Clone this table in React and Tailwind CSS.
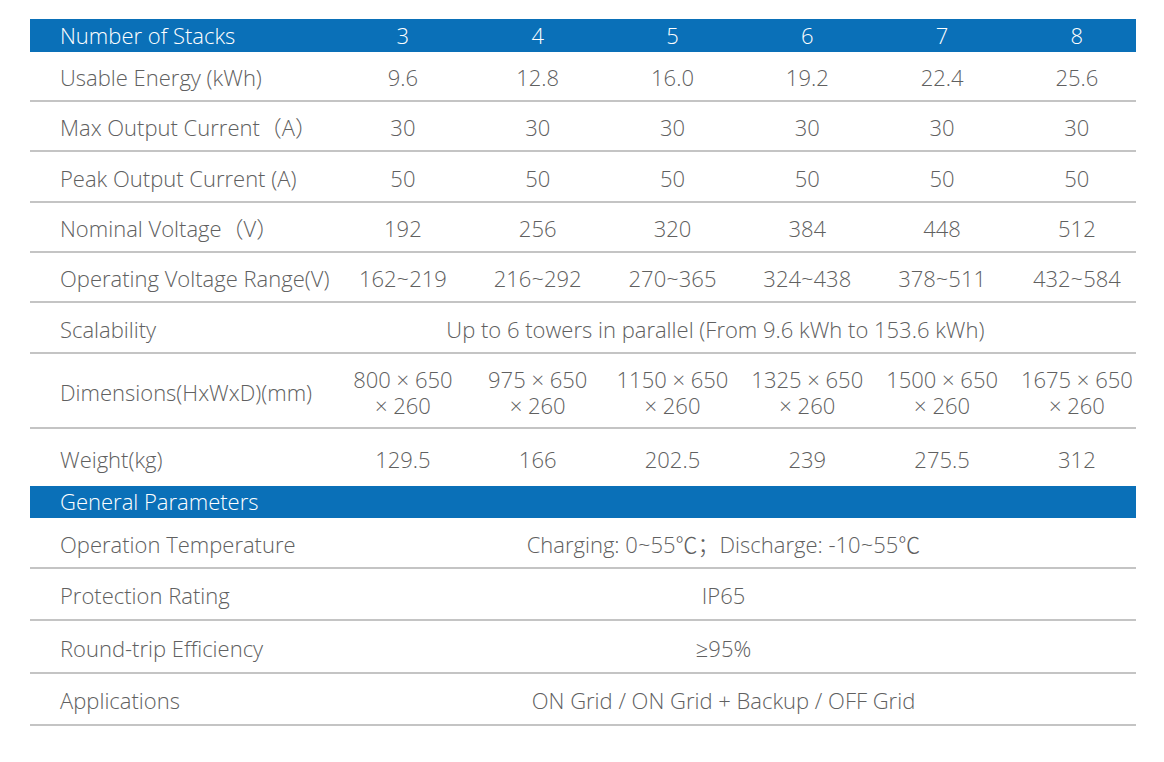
import React from "react";

const stacks = [3, 4, 5, 6, 7, 8];

const rows = [
  { label: "Usable Energy (kWh)", values: ["9.6", "12.8", "16.0", "19.2", "22.4", "25.6"], h: "h-[50px]" },
  { label: "Max Output Current（A）", values: ["30", "30", "30", "30", "30", "30"], h: "h-[50px]" },
  { label: "Peak Output Current (A)", values: ["50", "50", "50", "50", "50", "50"], h: "h-[51px]" },
  { label: "Nominal Voltage（V）", values: ["192", "256", "320", "384", "448", "512"], h: "h-[50px]" },
  { label: "Operating Voltage Range(V)", values: ["162~219", "216~292", "270~365", "324~438", "378~511", "432~584"], h: "h-[50px]" },
  { label: "Scalability", span: "Up to 6 towers in parallel (From 9.6 kWh to 153.6 kWh)", h: "h-[51px]" },
  {
    label: "Dimensions(HxWxD)(mm)",
    values: ["800", "975", "1150", "1325", "1500", "1675"].map((v) => (
      <>
        {v} × 650
        <br />× 260
      </>
    )),
    h: "h-[75px]",
  },
  { label: "Weight(kg)", values: ["129.5", "166", "202.5", "239", "275.5", "312"], h: "h-[57px]", last: true },
];

const general = [
  { label: "Operation Temperature", value: "Charging: 0~55℃；Discharge: -10~55℃", h: "h-[51px]" },
  { label: "Protection Rating", value: "IP65", h: "h-[52px]" },
  { label: "Round-trip Efficiency", value: "≥95%", h: "h-[53px]" },
  { label: "Applications", value: "ON Grid / ON Grid + Backup / OFF Grid", h: "h-[52px]" },
];

const SpecRow = ({ row }) => (
  <div
    className={`grid grid-cols-[297px_repeat(6,134.8px)] items-center pt-[2px] ${row.h} ${
      row.last ? "" : "border-b-2 border-[#c4c4c4]"
    }`}
  >
    <div className="pl-[30px] whitespace-nowrap">{row.label}</div>
    {row.span ? (
      <div className="col-span-6 text-center pr-[32px] whitespace-nowrap">{row.span}</div>
    ) : (
      row.values.map((v, i) => (
        <div key={i} className="text-center pl-[17px] leading-[26px] whitespace-nowrap">
          {v}
        </div>
      ))
    )}
  </div>
);

export default function App() {
  return (
    <div className="w-[1164px] h-[762px] bg-white pt-[19px] pl-[30px] text-[22px] leading-[30px] text-[#606060] font-['Open_Sans','Noto_Sans_CJK_SC',sans-serif] font-light">
      <div className="w-[1106px]">
        <div className="grid grid-cols-[297px_repeat(6,134.8px)] items-center h-[33px] pb-[2px] bg-[#0a70b8] text-white">
          <div className="pl-[30px]">Number of Stacks</div>
          {stacks.map((s) => (
            <div key={s} className="text-center pl-[17px]">
              {s}
            </div>
          ))}
        </div>
        {rows.map((r) => (
          <SpecRow key={r.label} row={r} />
        ))}
        <div className="flex items-center h-[32px] pb-[2px] bg-[#0a70b8] text-white pl-[30px]">
          General Parameters
        </div>
        {general.map((g) => (
          <div
            key={g.label}
            className={`grid grid-cols-[297px_1fr] items-center pt-[2px] ${g.h} border-b-2 border-[#c4c4c4]`}
          >
            <div className="pl-[30px] whitespace-nowrap">{g.label}</div>
            <div className="text-center pr-[16px] whitespace-nowrap">{g.value}</div>
          </div>
        ))}
      </div>
    </div>
  );
}
